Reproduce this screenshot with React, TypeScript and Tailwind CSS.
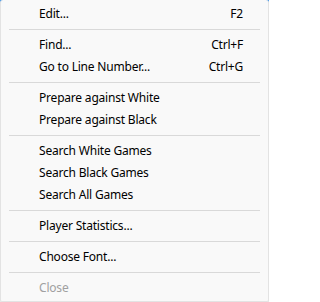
import React from "react";

type Item =
  | { kind: "item"; label: string; shortcut?: string; disabled?: boolean }
  | { kind: "sep" };

const items: Item[] = [
  { kind: "item", label: "Edit...", shortcut: "F2" },
  { kind: "sep" },
  { kind: "item", label: "Find...", shortcut: "Ctrl+F" },
  { kind: "item", label: "Go to Line Number...", shortcut: "Ctrl+G" },
  { kind: "sep" },
  { kind: "item", label: "Prepare against White" },
  { kind: "item", label: "Prepare against Black" },
  { kind: "sep" },
  { kind: "item", label: "Search White Games" },
  { kind: "item", label: "Search Black Games" },
  { kind: "item", label: "Search All Games" },
  { kind: "sep" },
  { kind: "item", label: "Player Statistics..." },
  { kind: "sep" },
  { kind: "item", label: "Choose Font..." },
  { kind: "sep" },
  { kind: "item", label: "Close", disabled: true },
];

export default function App() {
  return (
    <div className="w-[269px] h-[302px] bg-[linear-gradient(to_bottom,#4a9ae8_0_8px,#e8e8e8_8px)]">
      <div
        className="w-full h-full bg-[#f9f9f9] border-x border-b border-[#e3e3e3] rounded-t-[3px] rounded-b-[2px] pt-[3px] pb-px flex flex-col text-[12px] leading-none"
        style={{ fontFamily: '"Segoe UI", "Noto Sans", "Open Sans", sans-serif' }}
      >
        {items.map((it, i) =>
          it.kind === "sep" ? (
            <div key={i} className="h-[9px] flex items-center px-[8px]">
              <div className="h-px w-full bg-[#d9d9d9]" />
            </div>
          ) : (
            <div
              key={i}
              className={`h-[22px] flex items-center pl-[38px] pr-[25px] ${
                it.disabled ? "text-[#a0a0a0]" : "text-[#000000]"
              }`}
            >
              <span className="flex-1 tracking-[-0.2px]">{it.label}</span>
              {it.shortcut && <span className="tracking-[-0.2px]">{it.shortcut}</span>}
            </div>
          )
        )}
      </div>
    </div>
  );
}
